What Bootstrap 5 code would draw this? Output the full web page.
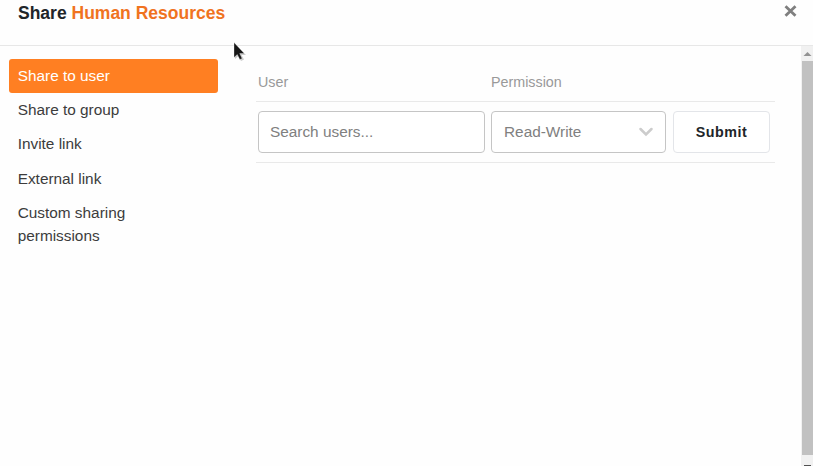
<!DOCTYPE html>
<html lang="en">
<head>
<meta charset="utf-8">
<title>Share Human Resources</title>
<link rel="stylesheet" href="https://cdn.jsdelivr.net/npm/bootstrap@5.3.0/dist/css/bootstrap.min.css">
<style>
body { font-family: "Liberation Sans", Arial, sans-serif; font-size: 15.36px; line-height: 23px; color: #212529; background: #fefefe; height: 466px; }
.dialog-head { height: 46px; border-bottom: 1px solid #e7e7e7; padding: 0 16px 0 18px; }
.dialog-title { font-size: 17.5px; line-height: 26px; }
.accent { color: #f0731f; }
.close-btn { width: 13px; height: 13px; margin-top: 5px; }
.share-nav { width: 209px; margin: 13px 0 0 9px; }
.share-nav .nav-link { color: #3c3c3c; padding: 5px 8.7px 6.2px; line-height: 23px; border-radius: 3px; }
.share-nav .nav-link.active { background: #ff7f22; color: #fff; }
.share-panel { width: 519px; margin: 13px 0 0 38px; }
.share-grid { display: grid; grid-template-columns: 227px 175px 97px; column-gap: 7px; padding-left: 2px; }
.share-grid > :nth-child(2) { margin-left: -1px; margin-right: 1px; }
.grid-head { height: 43px; padding-top: 12px; border-bottom: 1px solid #e9e9e9; color: #999; font-size: 14.3px; }
.grid-line { height: 61px; padding-top: 9px; border-bottom: 1px solid #e9e9e9; }
.share-grid .form-control, .pick { height: 42px; border: 1px solid #c5c5c5; border-radius: 4px; font-size: 15.36px; padding: 0 11px; background: #fff; color: #808080; }
.pick { padding: 0 11px 2px 12px; }
.pick svg { margin-top: 2px; }
.share-grid .form-control::placeholder { color: #808080; }
.submit-btn { height: 42px; border: 1px solid #e3e5e9; border-radius: 4px; font-size: 14.3px; font-weight: 700; letter-spacing: .5px; background: #fff; color: #212529; padding: 1px 0 0; margin-left: -1px; margin-right: 1px; }
.scroller { width: 12px; background: #f1f1f1; }
.scroll-thumb { background: #c1c1c1; margin-left: 1px; height: 394px; }
.pointer { left: 233px; top: 42px; }
</style>
<script src="https://cdn.jsdelivr.net/npm/bootstrap@5.3.0/dist/js/bootstrap.bundle.min.js"></script>
</head>
<body class="d-flex flex-column overflow-hidden position-relative">
<header class="dialog-head d-flex justify-content-between align-items-start flex-shrink-0">
  <h1 class="dialog-title fw-bold m-0">Share <span class="accent">Human Resources</span></h1>
  <button class="close-btn btn p-0 border-0 d-flex" type="button" aria-label="Close">
    <svg width="13" height="13" viewBox="0 0 13 13"><path d="M1.5 1.2l10 9.6M11.5 1.2l-10 9.6" stroke="#7f7f7f" stroke-width="2.8" fill="none"/></svg>
  </button>
</header>
<main class="d-flex flex-grow-1">
  <nav class="share-nav nav nav-pills flex-column flex-nowrap flex-shrink-0">
    <a class="nav-link active" href="#">Share to user</a>
    <a class="nav-link" href="#">Share to group</a>
    <a class="nav-link" href="#">Invite link</a>
    <a class="nav-link" href="#">External link</a>
    <a class="nav-link" href="#">Custom sharing<br>permissions</a>
  </nav>
  <section class="share-panel flex-shrink-0">
    <div class="share-grid grid-head"><span>User</span><span>Permission</span></div>
    <div class="share-grid grid-line">
      <input class="form-control" type="text" placeholder="Search users..." aria-label="User">
      <div class="pick d-flex align-items-center justify-content-between">
        <span>Read-Write</span>
        <svg width="16" height="10" viewBox="0 0 16 10"><path d="M2.5 2L8 7.5L13.5 2" fill="none" stroke="#ccc" stroke-width="2.5" stroke-linecap="round"/></svg>
      </div>
      <button class="submit-btn btn" type="button">Submit</button>
    </div>
  </section>
  <div class="scroller ms-auto d-flex flex-column flex-shrink-0">
    <svg class="flex-shrink-0" width="12" height="15" viewBox="0 0 12 15"><path d="M2.5 10L6.5 6L10.5 10Z" fill="#929292"/></svg>
    <div class="scroll-thumb flex-shrink-0"></div>
    <svg class="flex-shrink-0" width="12" height="11" viewBox="0 0 12 11"><path d="M3 10h7v1H3z" fill="#505050"/></svg>
  </div>
</main>
<svg class="pointer position-absolute" width="14" height="20" viewBox="0 0 14 20"><path d="M2 2v15l3.5-3 2.5 5 3-1.4-2.5-4.6H13z" fill="#ccc"/><path d="M1 .5v15l3.3-3 2.5 5 2.3-1.1-2.4-4.9h4.6z" fill="#171717" stroke="#fff" stroke-width=".3"/></svg>
</body>
</html>
